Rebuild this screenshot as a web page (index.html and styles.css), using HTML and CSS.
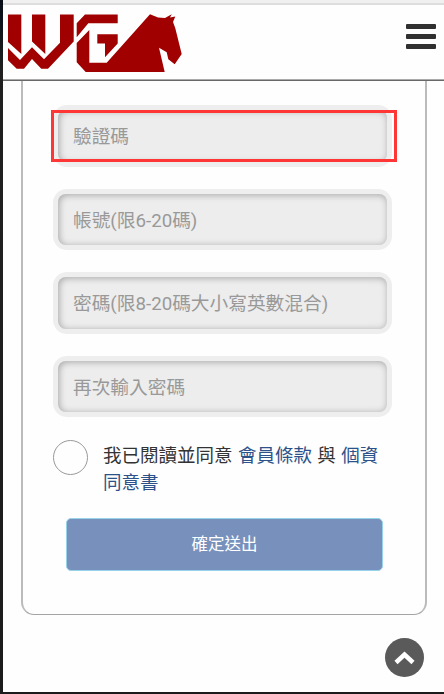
FILE: index.html
```html
<!DOCTYPE html>
<html lang="zh-Hant">

<head>
    <meta charset="utf-8">
    <title>WG</title>
    <link rel="stylesheet" href="styles.css">
</head>

<body>
    <div class="page">
        <div class="topbar"></div>
        <header class="header">
            <svg class="logo" width="175" height="60" viewBox="7 13 175 60">
                <path d="M8 14.500H21.300V54L8 42ZM32 14.500H45.300V54L32 41.500ZM60 14.500H73.700V41.500L48 68.700H41.300L32 59L24 68.700H16.700L8 60.300V48L20 60L32 47.300L44 59.300L60 42.700Z" />
                <path d="M76.700 37.300V23.300L85 14.400H117.700V23.300H88.300Z" />
                <path d="M76.700 43L89.300 30V62.700H106.700L150 14.300L158 17.500L165 18L171.700 14.300L170 17.500L175.300 16.500L173 22L175.300 28.300L181.700 54L174.700 64.300L168.300 59.300L166.700 52.300L159 47.700L164.700 72H85.700L76.700 62.300Z" />
                <path d="M97.300 34.200H117.700V43.500L105 57.300V43.500H97.300Z" />
            </svg>
            <div class="menu">
                <span></span>
                <span></span>
                <span></span>
            </div>
        </header>
        <form class="card">
            <div class="field marked">
                <input type="text" placeholder="驗證碼">
            </div>
            <div class="field">
                <input type="text" placeholder="帳號(限6-20碼)">
            </div>
            <div class="field">
                <input type="text" placeholder="密碼(限8-20碼大小寫英數混合)">
            </div>
            <div class="field">
                <input type="text" placeholder="再次輸入密碼">
            </div>
            <div class="agree">
                <span class="radio"></span>
                <p>我已閱讀並同意 <a>會員條款</a> 與 <a>個資同意書</a></p>
            </div>
            <button type="button" class="submit">確定送出</button>
        </form>
        <div class="footer">
            <div class="gotop">
                <svg width="39" height="39" viewBox="0 0 39 39">
                    <path d="M11 24.500L19.500 16.500L28 24.500" />
                </svg>
            </div>
        </div>
    </div>
</body>

</html>
```

FILE: styles.css
```css
* {
    box-sizing: border-box;
}

body {
    margin: 0;
    height: 694px;
    overflow: hidden;
    background: linear-gradient(#080d18, #202020 70px, #1c1c1c);
    font-family: Roboto, "Noto Sans CJK TC", sans-serif;
    color: #333;
}

.page {
    height: 692px;
    margin-left: 3px;
    background-color: #fefefe;
}

.topbar {
    height: 5px;
    background-color: #f0f0f0;
    border-bottom: 2px solid #ddd;
}

.header {
    height: 76px;
    display: flex;
    justify-content: space-between;
    padding: 8px 8px 0 4px;
    border-bottom: 1px solid #686868;
    box-shadow: inset 0 -1px #aaa;
}

.logo {
    fill: #a00000;
}

.menu {
    display: flex;
    flex-direction: column;
    gap: 5px;
    padding-top: 11px;
}

.menu span {
    width: 30px;
    height: 5px;
    border-radius: 1px;
    background-color: #303030;
}

.card {
    height: 534px;
    margin: 0 17px 0 18px;
    padding: 24px 33px 0 30px;
    border: 2px solid #bbb;
    border-top: 0;
    border-bottom: 1px solid #a4a4a4;
    border-radius: 0 0 13px 13px;
}

.field {
    position: relative;
    width: 339px;
    height: 61.500px;
    margin-bottom: 22px;
    padding: 5px;
    border-radius: 14px;
    background-color: #eee;
}

.field input {
    display: block;
    width: 100%;
    height: 100%;
    padding: 3px 15px 0;
    border: 0;
    border-radius: 8px;
    outline: none;
    background-color: #ededed;
    box-shadow: inset 1px 1px 7px #a4a4a4;
    font-family: inherit;
    font-size: 18.700px;
}

.field input::placeholder {
    color: #999;
}

/* red frame over the first input */
.marked::after {
    content: "";
    position: absolute;
    left: -2px;
    top: 5px;
    width: 346px;
    height: 52px;
    box-sizing: border-box;
    border: 3px solid #ff3636;
}

.agree {
    display: flex;
    gap: 15px;
    height: 79px;
    padding-top: 1px;
}

.radio {
    width: 35px;
    height: 35px;
    flex: none;
    border: 1px solid #999;
    border-radius: 50%;
}

.agree p {
    width: 282px;
    margin: 3px 0 0;
    font-size: 18.500px;
    line-height: 27px;
    word-spacing: 0.800px;
}

.agree a {
    color: #2d5289;
}

.submit {
    display: block;
    width: 317px;
    height: 53px;
    margin-left: 13px;
    padding: 0 6px 3px;
    border: 1px solid #96d3e8;
    border-radius: 5px;
    background-color: #7891bc;
    color: #fff;
    font-family: inherit;
    font-size: 16.500px;
}

.footer {
    display: flex;
    justify-content: flex-end;
    padding: 23px 20px 0 0;
}

.gotop {
    width: 39px;
    height: 39px;
    border-radius: 50%;
    background-color: #5a5a5a;
}

.gotop path {
    fill: none;
    stroke: #fff;
    stroke-width: 4.500;
}
```
